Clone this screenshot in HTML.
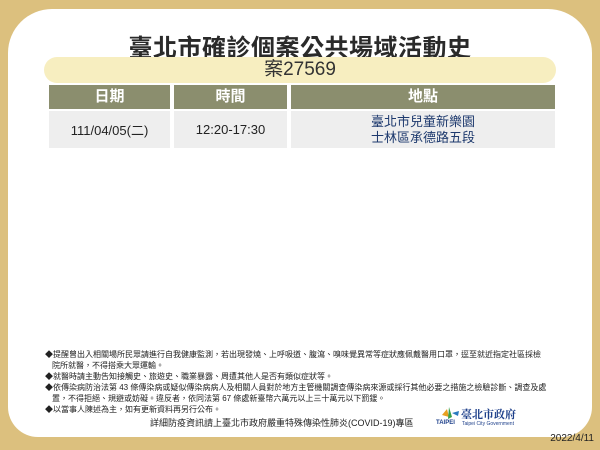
<!DOCTYPE html>
<html><head><meta charset="utf-8"><style>
*{margin:0;padding:0;box-sizing:border-box}
body{width:600px;height:450px;background:#dcc07e;position:relative;overflow:hidden;font-family:"Liberation Sans","Noto Sans CJK TC",sans-serif;color:#222}
.panel{position:absolute;left:8px;top:9px;width:584px;height:428px;background:#fff;border-radius:44px 44px 30px 30px}
.title{position:absolute;left:0;width:600px;top:28px;text-align:center;font-size:24px;font-weight:bold;color:#2a2a2a;letter-spacing:0.5px}
.pill{position:absolute;left:44px;top:57px;width:512px;height:26px;background:#f7eec0;border-radius:13px;text-align:center;font-size:19px;line-height:26px;color:#333}
.h{position:absolute;top:85px;height:24px;background:#8b8e6e;color:#fff;font-size:15px;font-weight:bold;text-align:center;line-height:24px}
.c{position:absolute;top:111px;height:37px;background:#eeeeee;font-size:13px;text-align:center;display:flex;align-items:center;justify-content:center;color:#222}
.notes{position:absolute;left:45px;top:349px;font-size:8px;line-height:11px;color:#222;width:502px}
.notes div{padding-left:7px;text-indent:-7px}
.foot{position:absolute;left:150px;top:416px;font-size:9px;color:#222}
.date{position:absolute;right:6px;top:433px;font-size:10px;color:#222}
</style></head><body>
<div class="panel"></div>
<div class="title">臺北市確診個案公共場域活動史</div>
<div class="pill">案27569</div>
<div class="h" style="left:49px;width:121px">日期</div>
<div class="h" style="left:174px;width:113px">時間</div>
<div class="h" style="left:291px;width:264px">地點</div>
<div class="c" style="left:49px;width:121px">111/04/05(二)</div>
<div class="c" style="left:174px;width:113px">12:20-17:30</div>
<div class="c" style="left:291px;width:264px;line-height:16px;flex-direction:column;color:#1e3a6e">臺北市兒童新樂園<br>士林區承德路五段</div>
<div class="notes">
<div>◆提醒曾出入相關場所民眾請進行自我健康監測，若出現發燒、上呼吸道、腹瀉、嗅味覺異常等症狀應佩戴醫用口罩，逕至就近指定社區採檢院所就醫，不得搭乘大眾運輸。</div>
<div>◆就醫時請主動告知接觸史、旅遊史、職業暴露、周遭其他人是否有類似症狀等。</div>
<div>◆依傳染病防治法第 43 條傳染病或疑似傳染病病人及相關人員對於地方主管機關調查傳染病來源或採行其他必要之措施之檢驗診斷、調查及處置，不得拒絕、規避或妨礙。違反者，依同法第 67 條處新臺幣六萬元以上三十萬元以下罰鍰。</div>
<div>◆以當事人陳述為主，如有更新資料再另行公布。</div>
</div>
<div class="foot">詳細防疫資訊請上臺北市政府嚴重特殊傳染性肺炎(COVID-19)專區</div>
<svg style="position:absolute;left:440px;top:405px" width="20" height="16"><path d="M2 10 L7 4 L9 12 Z" fill="#e8a020"/><path d="M9 2 L12 12 L8 14 Z" fill="#3aa04a"/><path d="M12 8 L19 6 L18 11 Z" fill="#2a7ac0"/></svg>
<div style="position:absolute;left:436px;top:420px;font-size:6px;font-weight:bold;color:#1d3f8a">TAIPEI</div>
<div style="position:absolute;left:461px;top:406px;font-size:11px;font-weight:bold;color:#1d3f8a;font-family:'Noto Serif CJK SC',serif">臺北市政府</div>
<div style="position:absolute;left:462px;top:421px;font-size:5px;color:#1d3f8a">Taipei City Government</div>
<div class="date">2022/4/11</div>
</body></html>
